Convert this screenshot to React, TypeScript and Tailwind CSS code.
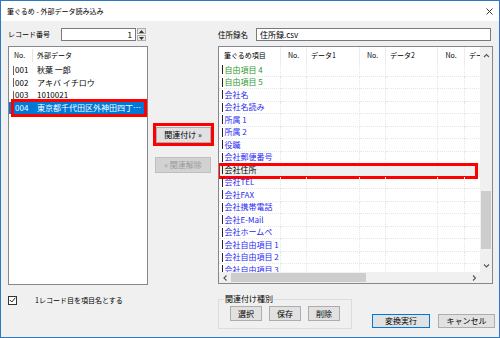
const leftRows = [
  { no: '001', name: '秋葉 一郎' },
  { no: '002', name: 'アキバ イチロウ' },
  { no: '003', name: '1010021' },
  { no: '004', name: '東京都千代田区外神田四丁目1-1', sel: true },
]

const cols = ['w-[62px]', 'w-[26px]', 'w-[53px]', 'w-[26px]', 'w-[52px]', 'w-[27px]', 'w-[40px]']
const heads = ['筆ぐるめ項目', 'No.', 'データ1', 'No.', 'データ2', 'No.', 'データ3']

const items = [
  { t: '自由項目 4', green: true },
  { t: '自由項目 5', green: true },
  { t: '会社名' },
  { t: '会社名読み' },
  { t: '所属 1' },
  { t: '所属 2' },
  { t: '役職' },
  { t: '会社郵便番号' },
  { t: '会社住所', sel: true },
  { t: '会社TEL' },
  { t: '会社FAX' },
  { t: '会社携帯電話' },
  { t: '会社E-Mail' },
  { t: '会社ホームペ' },
  { t: '会社自由項目 1' },
  { t: '会社自由項目 2' },
  { t: '会社自由項目 3' },
]

function Chevron({ dir }: { dir: 'up' | 'down' | 'left' | 'right' }) {
  const d = {
    up: 'M1 4L3.5 1.5L6 4',
    down: 'M1 1.5L3.5 4L6 1.5',
    left: 'M4.5 0.5L2 3L4.5 5.5',
    right: 'M2 0.5L4.5 3L2 5.5',
  }[dir]
  const w = dir === 'up' || dir === 'down' ? 7 : 6
  const h = dir === 'up' || dir === 'down' ? 5.5 : 6
  return (
    <svg width={w} height={h} viewBox={`0 0 ${w} ${h}`}>
      <path d={d} stroke="#555" strokeWidth="1.1" fill="none" />
    </svg>
  )
}

function Btn({ label, className = '' }: { label: string; className?: string }) {
  return (
    <div className={`flex items-center justify-center bg-[#e1e1e1] border border-[#adadad] ${className}`}>
      {label}
    </div>
  )
}

export default function App() {
  return (
    <div className="w-[500px] h-[338px] border border-[#2b79c2] bg-[#f0f0f0] font-['Noto_Sans_CJK_JP','Noto_Sans',sans-serif] text-[8px] leading-none text-black overflow-hidden flex flex-col">
      {/* Title bar */}
      <div className="h-[20px] shrink-0 bg-white flex items-center pl-[6px] pr-[6px]">
        <span className="text-[7px]">筆ぐるめ - 外部データ読み込み</span>
        <svg className="ml-auto" width="7" height="7" viewBox="0 0 7 7">
          <path d="M0.5 0.5L6.5 6.5M6.5 0.5L0.5 6.5" stroke="#222" strokeWidth="0.9" />
        </svg>
      </div>

      <div className="flex pl-[7px] pt-[7px]">
        {/* Left column */}
        <div className="w-[140px] flex flex-col">
          <div className="h-[13px] flex items-center">
            <span className="w-[53px] text-[7px]">レコード番号</span>
            <div className="w-[75px] h-[13px] border border-[#7a7a7a] bg-white flex items-center justify-end pr-[3px]">1</div>
            <div className="ml-[1px] w-[9px] h-[13px] flex flex-col gap-[1px]">
              <div className="flex-1 bg-[#e8e8e8] border border-[#adadad] flex items-center justify-center">
                <svg width="5" height="3" viewBox="0 0 5 3"><path d="M0 3L2.5 0L5 3Z" fill="#333" /></svg>
              </div>
              <div className="flex-1 bg-[#e8e8e8] border border-[#adadad] flex items-center justify-center">
                <svg width="5" height="3" viewBox="0 0 5 3"><path d="M0 0L2.5 3L5 0Z" fill="#333" /></svg>
              </div>
            </div>
          </div>

          <div className="mt-[5px] h-[239px] border border-[#828790] bg-white flex flex-col">
            <div className="h-[17px] flex items-center shrink-0 text-[7px]">
              <span className="w-[24px] pl-[5px] h-[13px] flex items-center border-r border-[#e5e5e5]">No.</span>
              <span className="pl-[4px]">外部データ</span>
            </div>
            {leftRows.map((r) => (
              <div key={r.no} className="relative h-[12.5px] shrink-0">
                <div className={`h-full flex items-center ${r.sel ? 'bg-[#0078d7] text-white' : ''}`}>
                  <span className="w-[28px] pl-[3.5px] flex items-center h-full shrink-0">
                    <span className={`w-[1px] h-[9px] mr-[1.5px] ${r.sel ? 'bg-transparent' : 'bg-[#666]'}`} />
                    {r.no}
                  </span>
                  <span className="flex-1 truncate leading-[12px] pr-[3px]">{r.name}</span>
                </div>
                {r.sel && <div className="absolute left-[2px] right-0 -top-[3px] -bottom-[3px] border-[3px] border-[#ff0000]" />}
              </div>
            ))}
          </div>

          <div className="mt-[10px] h-[10px] flex items-center">
            <div className="w-[9px] h-[9px] border border-[#333] bg-white flex items-center justify-center">
              <svg width="7" height="6" viewBox="0 0 7 6"><path d="M0.8 3L2.8 5L6.3 0.8" stroke="#222" strokeWidth="1" fill="none" /></svg>
            </div>
            <span className="ml-[18px] text-[7px]">1レコード目を項目名とする</span>
          </div>
        </div>

        {/* Middle column */}
        <div className="w-[70px] flex flex-col items-center pt-[99px]">
          <div className="relative">
            <Btn label="関連付け »" className="w-[55px] h-[16px]" />
            <div className="absolute -left-[3px] -right-[3px] -top-[4px] -bottom-[3px] border-[3px] border-[#ff0000]" />
          </div>
          <div className="mt-[14px] w-[56px] h-[16px] flex items-center justify-center bg-[#d2d2d2] border border-[#bfbfbf] text-[#9a9a9a]">
            « 関連解除
          </div>
        </div>

        {/* Right column */}
        <div className="w-[275px] flex flex-col">
          <div className="h-[13px] flex items-center">
            <span className="w-[38px] text-[7.5px]">住所録名</span>
            <div className="w-[235px] h-[13px] border border-[#7a7a7a] bg-white flex items-center pl-[3px]">住所録.csv</div>
          </div>

          <div className="mt-[5px] h-[238px] border border-[#828790] bg-white flex flex-col">
            <div className="h-[225px] flex">
              <div className="flex-1 overflow-hidden flex flex-col">
                <div className="h-[17px] flex shrink-0 text-[7px]">
                  {heads.map((h, i) => (
                    <div key={i} className={`${cols[i]} shrink-0 h-full flex items-center whitespace-nowrap border-r border-[#ececec] ${i === 0 ? 'pl-[5px]' : i % 2 === 1 ? 'justify-center' : 'pl-[4px]'}`}>
                      {h}
                    </div>
                  ))}
                </div>
                {items.map((it) => (
                  <div key={it.t} className="relative h-[12.5px] flex shrink-0">
                    {cols.map((c, i) => (
                      <div key={i} className={`${c} shrink-0 h-full flex items-center border-r border-b border-dotted border-[#e6e6e6] ${it.sel ? 'bg-[#efefef]' : ''}`}>
                        {i === 0 && (
                          <span className={`flex items-center pl-[3px] whitespace-nowrap ${it.sel ? 'text-black' : it.green ? 'text-[#2e9a2e]' : 'text-[#2a2af0]'}`}>
                            <span className="w-[1px] h-[9px] bg-[#222] mr-[1.5px]" />
                            {it.t}
                          </span>
                        )}
                      </div>
                    ))}
                    {it.sel && <div className="absolute -left-[2px] right-[2px] -top-[1.5px] -bottom-[2px] border-[3px] border-[#ff0000]" />}
                  </div>
                ))}
              </div>
              <div className="w-[12px] bg-[#f0f0f0] flex flex-col">
                <div className="h-[17px] flex items-center justify-center"><Chevron dir="up" /></div>
                <div className="h-[127px]" />
                <div className="h-[58px] mx-[1px] bg-[#cdcdcd]" />
                <div className="flex-1" />
                <div className="h-[12px] flex items-center justify-center"><Chevron dir="down" /></div>
              </div>
            </div>
            <div className="h-[11px] flex bg-[#f0f0f0]">
              <div className="w-[12px] flex items-center justify-center"><Chevron dir="left" /></div>
              <div className="w-[135px] my-[1px] bg-[#cdcdcd]" />
              <div className="flex-1" />
              <div className="w-[12px] flex items-center justify-center"><Chevron dir="right" /></div>
              <div className="w-[12px]" />
            </div>
          </div>

          <div className="mt-[11px] flex">
            <fieldset className="w-[130px] h-[34px] border border-[#dcdcdc] px-[11px]">
              <legend className="ml-[-6px] px-[1px]">関連付け種別</legend>
              <div className="flex gap-[7px] mt-[3px]">
                <Btn label="選択" className="w-[32px] h-[15px]" />
                <Btn label="保存" className="w-[32px] h-[15px]" />
                <Btn label="削除" className="w-[32px] h-[15px]" />
              </div>
            </fieldset>
            <div className="ml-[20px] mt-[19px] flex gap-[8px]">
              <Btn label="変換実行" className="w-[58px] h-[14px] !border-[#0078d7]" />
              <Btn label="キャンセル" className="w-[57px] h-[14px]" />
            </div>
          </div>
        </div>
      </div>
    </div>
  )
}
